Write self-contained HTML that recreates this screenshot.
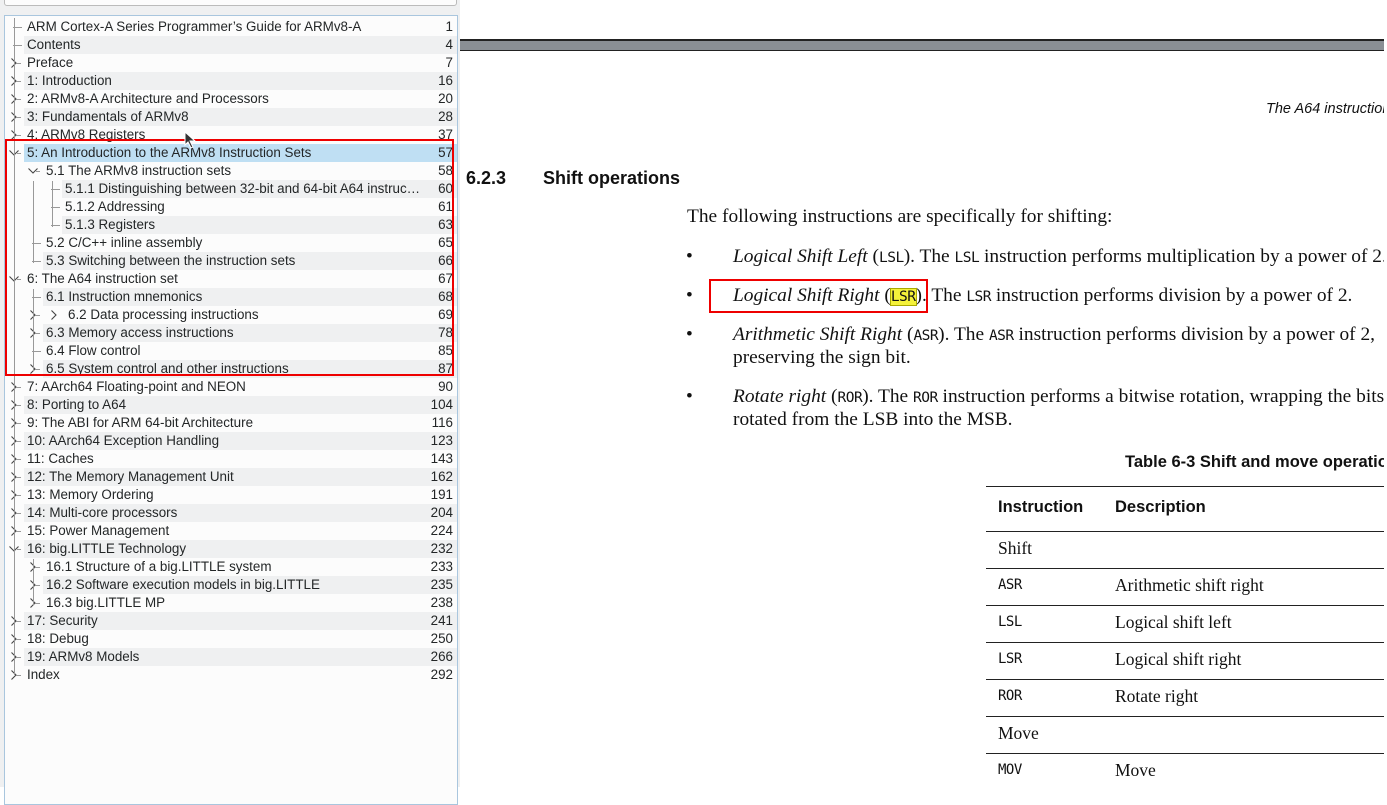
<!DOCTYPE html>
<html><head><meta charset="utf-8"><style>
*{margin:0;padding:0;box-sizing:border-box}
body{width:1387px;height:787px;overflow:hidden;background:#fff;position:relative;font-family:"Liberation Sans",sans-serif}
#left{position:absolute;left:0;top:0;width:460px;height:787px;background:#eff0f1}
#search{position:absolute;left:4px;top:-8px;width:453px;height:14px;border:1px solid #bbb;border-radius:3px;background:#fcfcfc}
#tree{position:absolute;left:4px;top:15px;width:454px;height:790px;border:1px solid #a9c6de;background:#fcfcfc}
.r{position:absolute;left:0;height:18px;width:457px;font-size:13.4px;line-height:18px;color:#232627}
.r .bg{position:absolute;top:0;bottom:0;right:0}
.r .t{position:absolute;white-space:nowrap}
.r .n{position:absolute;right:4px}
.sh .bg{background:#eff0f1}
.sel .bg{background:#bfdff3}
.h{position:absolute;height:1px;background:#999}
.v{position:absolute;width:1px;background:#999}
#red1{position:absolute;left:5px;top:139px;width:449px;height:237px;border:2px solid #e00}
#right{position:absolute;left:460px;top:0;width:924px;height:787px;background:#fff;overflow:hidden}
#bar{position:absolute;left:0;top:39px;width:924px;height:12px;background:#8a8f94;border-top:2px solid #222;border-bottom:1px solid #222}
.tm{font-family:"Liberation Serif",serif;font-size:19.4px;color:#111;position:absolute;white-space:nowrap}
.mono{font-family:"DejaVu Sans Mono","Liberation Mono",monospace;font-size:14.5px;letter-spacing:-0.5px}
.tl{position:absolute;left:526px;width:400px;height:1px;background:#222}
.td{font-size:17.5px}
</style></head><body>
<div id="left">
<div id="search"></div>
<div id="tree"></div>
</div>
<div id="rows"></div>
<script>
const rows=[
[0,"ARM Cortex-A Series Programmer’s Guide for ARMv8-A","1",0],
[0,"Contents","4",0],
[0,"Preface","7",1],
[0,"1: Introduction","16",1],
[0,"2: ARMv8-A Architecture and Processors","20",1],
[0,"3: Fundamentals of ARMv8","28",1],
[0,"4: ARMv8 Registers","37",1],
[0,"5: An Introduction to the ARMv8 Instruction Sets","57",2],
[1,"5.1 The ARMv8 instruction sets","58",2],
[2,"5.1.1 Distinguishing between 32-bit and 64-bit A64 instruc…","60",0],
[2,"5.1.2 Addressing","61",0],
[2,"5.1.3 Registers","63",0],
[1,"5.2 C/C++ inline assembly","65",0],
[1,"5.3 Switching between the instruction sets","66",0],
[0,"6: The A64 instruction set","67",2],
[1,"6.1 Instruction mnemonics","68",0],
[1,"§6.2 Data processing instructions","69",1],
[1,"6.3 Memory access instructions","78",1],
[1,"6.4 Flow control","85",0],
[1,"6.5 System control and other instructions","87",1],
[0,"7: AArch64 Floating-point and NEON","90",1],
[0,"8: Porting to A64","104",1],
[0,"9: The ABI for ARM 64-bit Architecture","116",1],
[0,"10: AArch64 Exception Handling","123",1],
[0,"11: Caches","143",1],
[0,"12: The Memory Management Unit","162",1],
[0,"13: Memory Ordering","191",1],
[0,"14: Multi-core processors","204",1],
[0,"15: Power Management","224",1],
[0,"16: big.LITTLE Technology","232",2],
[1,"16.1 Structure of a big.LITTLE system","233",1],
[1,"16.2 Software execution models in big.LITTLE","235",1],
[1,"16.3 big.LITTLE MP","238",1],
[0,"17: Security","241",1],
[0,"18: Debug","250",1],
[0,"19: ARMv8 Models","266",1],
[0,"Index","292",1]];
let h="";
const R=(x,y)=>`<svg style="position:absolute;left:${x}px;top:${y}px" width="8" height="12"><path d="M1.5 1.5 L6 6 L1.5 10.5" fill="none" stroke="#444" stroke-width="1.1"/></svg>`;
const D=(x,y)=>`<svg style="position:absolute;left:${x}px;top:${y}px" width="12" height="8"><path d="M1.5 1.5 L6 6 L10.5 1.5" fill="none" stroke="#444" stroke-width="1.1"/></svg>`;
rows.forEach((r,i)=>{
 const top=18+18*i, tx=[27,46,65][r[0]], ax=tx-14;
 const cls=i==7?"sel":(i%2?"sh":"");
 let txt=r[1], extra="";
 if(txt[0]=="§"){txt=txt.slice(1);extra=R(tx+4,top+3);}
 const tl = r[1][0]=="§"? tx+22 : tx;
 h+=`<div class="r ${cls}" style="top:${top}px;left:0"><div class="bg" style="left:${tx-3}px"></div><span class="t" style="left:${tl}px">${txt}</span><span class="n">${r[2]}</span></div>`+extra;
 const cy=top+9;
 if(r[3]==1) h+=R(ax-3,cy-6)+`<div class="h" style="left:${ax+3}px;top:${cy}px;width:5px"></div>`;
 else if(r[3]==2) h+=D(ax-5,cy-4)+`<div class="h" style="left:${ax+4}px;top:${cy}px;width:4px"></div>`;
 else h+=`<div class="h" style="left:${ax}px;top:${cy}px;width:9px"></div>`;
});
h+=`<div class="v" style="left:14px;top:18px;height:657px"></div>`;
h+=`<div class="v" style="left:33px;top:181px;height:82px"></div><div class="v" style="left:52px;top:181px;height:46px"></div><div class="v" style="left:33px;top:289px;height:82px"></div><div class="v" style="left:33px;top:559px;height:46px"></div>`;
document.getElementById("rows").innerHTML=h;
</script>
<div id="red1"></div>
<svg style="position:absolute;left:184px;top:131px" width="14" height="18"><path d="M1 1 L1 14 L4 11 L7 17 L9 16 L6 10 L11 10 Z" fill="#333" stroke="#fff" stroke-width="1"/></svg>
<div id="right">
<div id="bar"></div>
<div style="position:absolute;left:924px;top:0;width:3px;height:787px;background:#eff0f1"></div>
<div style="position:absolute;left:806px;top:101px;font:italic 14.5px 'Liberation Sans',sans-serif;color:#111;white-space:nowrap">The A64 instructions</div>
<div style="position:absolute;left:6px;top:168px;font:bold 18px 'Liberation Sans',sans-serif;color:#111">6.2.3</div>
<div style="position:absolute;left:83px;top:168px;font:bold 18px 'Liberation Sans',sans-serif;color:#111">Shift operations</div>
<div class="tm" style="left:227px;top:206px">The following instructions are specifically for shifting:</div>
<div class="tm" style="left:226px;top:246px">•</div><div class="tm" style="left:273px;top:246px"><i>Logical Shift Left</i> (<span class="mono">LSL</span>). The <span class="mono">LSL</span> instruction performs multiplication by a power of 2.</div>
<div class="tm" style="left:226px;top:285px">•</div><div class="tm" style="left:273px;top:285px"><i>Logical Shift Right</i> (<span class="mono" style="background:#f4f23a;outline:1px solid #aa0">LSR</span>). The <span class="mono">LSR</span> instruction performs division by a power of 2.</div>
<div style="position:absolute;left:249px;top:279px;width:219px;height:34px;border:2px solid #e00"></div>
<div class="tm" style="left:226px;top:324px">•</div><div class="tm" style="left:273px;top:324px"><i>Arithmetic Shift Right</i> (<span class="mono">ASR</span>). The <span class="mono">ASR</span> instruction performs division by a power of 2,</div>
<div class="tm" style="left:273px;top:347px">preserving the sign bit.</div>
<div class="tm" style="left:226px;top:386px">•</div><div class="tm" style="left:273px;top:386px"><i>Rotate right</i> (<span class="mono">ROR</span>). The <span class="mono">ROR</span> instruction performs a bitwise rotation, wrapping the bits</div>
<div class="tm" style="left:273px;top:409px">rotated from the LSB into the MSB.</div>
<div style="position:absolute;left:665px;top:453px;font:bold 16.5px 'Liberation Sans',sans-serif;color:#111;white-space:nowrap">Table 6-3 Shift and move operations</div>
<div class="tl" style="top:486px"></div>
<div style="position:absolute;left:538px;top:498px;font:bold 16.5px 'Liberation Sans',sans-serif;color:#111">Instruction</div>
<div style="position:absolute;left:655px;top:498px;font:bold 16.5px 'Liberation Sans',sans-serif;color:#111">Description</div>
<div class="tl" style="top:531px"></div>
<div class="tm td" style="left:538px;top:538px">Shift</div>
<div class="tl" style="top:568px"></div>
<div class="tm mono" style="left:538px;top:577px;font-size:14px">ASR</div><div class="tm td" style="left:655px;top:575px">Arithmetic shift right</div>
<div class="tl" style="top:605px"></div>
<div class="tm mono" style="left:538px;top:614px;font-size:14px">LSL</div><div class="tm td" style="left:655px;top:612px">Logical shift left</div>
<div class="tl" style="top:642px"></div>
<div class="tm mono" style="left:538px;top:651px;font-size:14px">LSR</div><div class="tm td" style="left:655px;top:649px">Logical shift right</div>
<div class="tl" style="top:679px"></div>
<div class="tm mono" style="left:538px;top:688px;font-size:14px">ROR</div><div class="tm td" style="left:655px;top:686px">Rotate right</div>
<div class="tl" style="top:716px"></div>
<div class="tm td" style="left:538px;top:723px">Move</div>
<div class="tl" style="top:753px"></div>
<div class="tm mono" style="left:538px;top:762px;font-size:14px">MOV</div><div class="tm td" style="left:655px;top:760px">Move</div>
</div>
</body></html>
